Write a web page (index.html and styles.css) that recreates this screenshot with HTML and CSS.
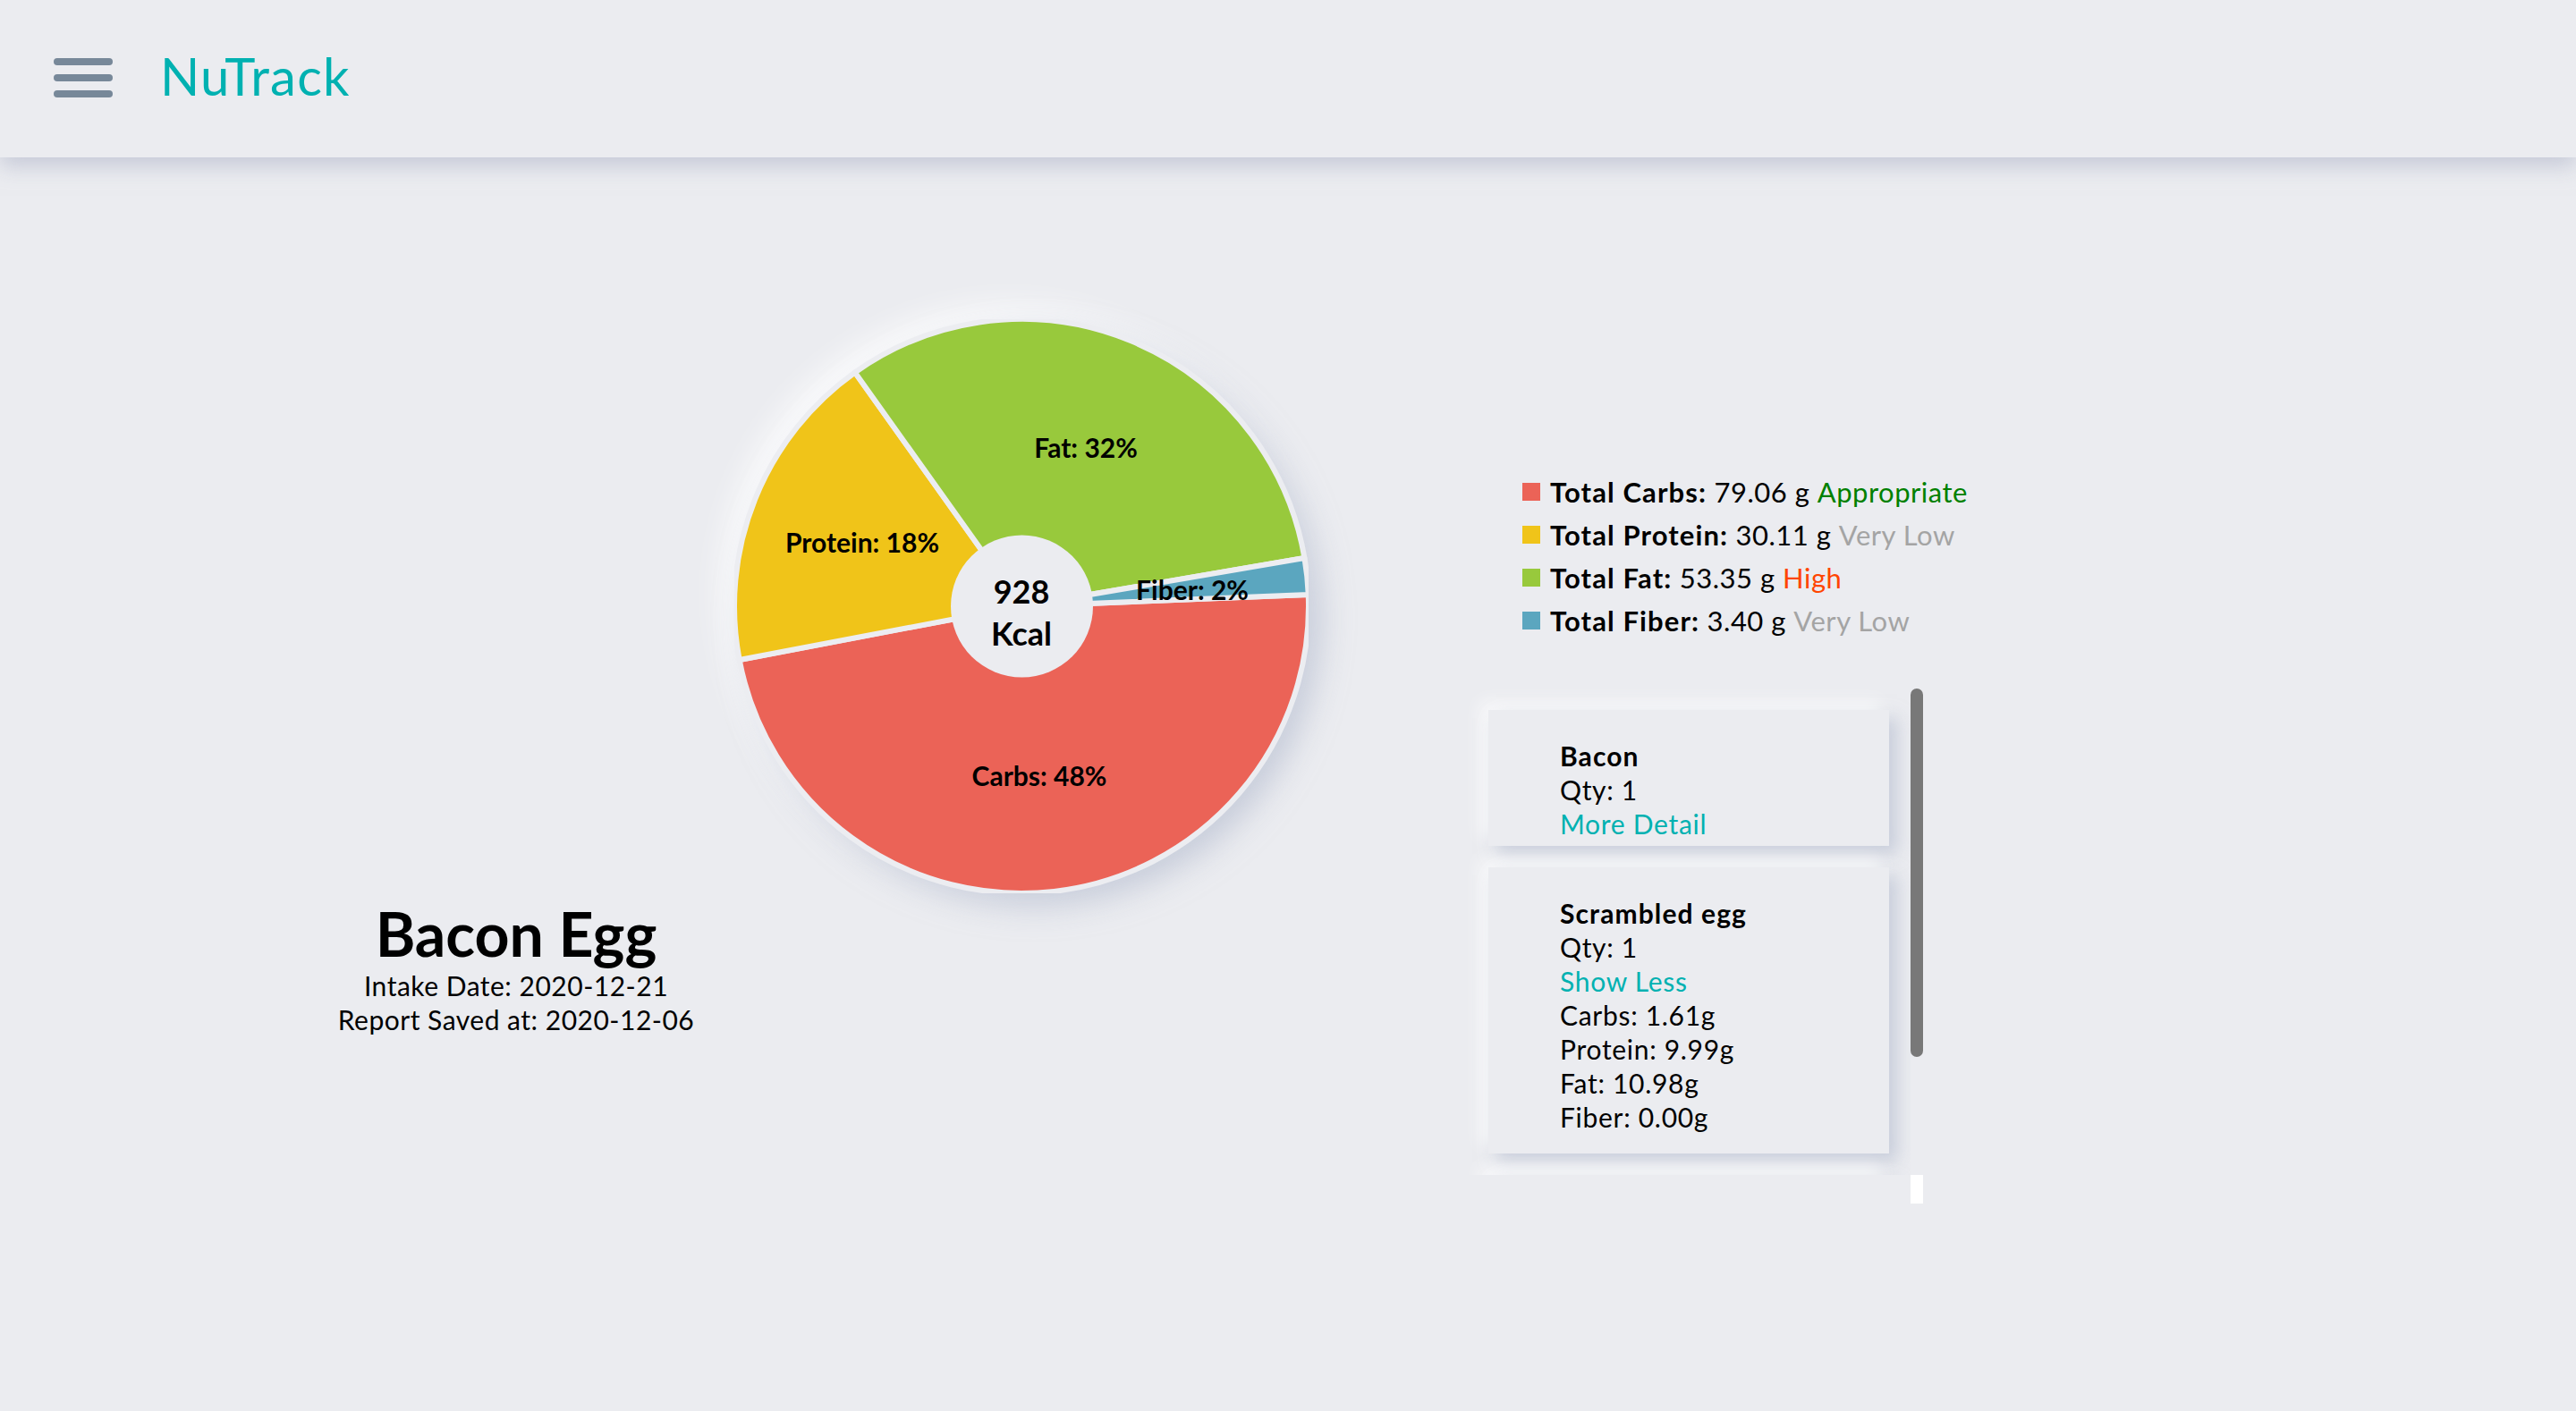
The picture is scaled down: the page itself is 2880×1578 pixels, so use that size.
FILE: index.html
```html
<!DOCTYPE html>
<html lang="en">
<head>
<meta charset="utf-8">
<title>NuTrack</title>
<link rel="stylesheet" href="styles.css">
</head>
<body>
<header class="topbar">
  <svg class="menu-icon" width="66" height="44" viewBox="0 0 66 44" aria-hidden="true">
    <rect x="0" y="0" width="66" height="8" rx="4" fill="#778899"/>
    <rect x="0" y="18" width="66" height="8" rx="4" fill="#778899"/>
    <rect x="0" y="36" width="66" height="8" rx="4" fill="#778899"/>
  </svg>
  <div class="brand">NuTrack</div>
</header>

<main class="report">
  <section class="chart-col">
    <div class="pie">
      <svg width="642" height="642" viewBox="0 0 642 642">
        <g class="slices">
          <path fill="#eb6357" d="M321,321 L641.74,308.12 A321,321 0 0 1 5.65,380.93 Z"/>
          <path fill="#f0c419" d="M321,321 L5.65,380.93 A321,321 0 0 1 134.84,59.48 Z"/>
          <path fill="#98c93c" d="M321,321 L134.84,59.48 A321,321 0 0 1 637.44,267.08 Z"/>
          <path fill="#5ba6bf" d="M321,321 L637.44,267.08 A321,321 0 0 1 641.74,308.12 Z"/>
        </g>
        <circle cx="321.5" cy="321" r="79.5" fill="#ebecf0"/>
        <g class="labels">
          <text x="393" y="155">Fat: 32%</text>
          <text x="143" y="261">Protein: 18%</text>
          <text x="341" y="522">Carbs: 48%</text>
          <text x="512" y="314">Fiber: 2%</text>
        </g>
        <g class="kcal">
          <text x="321" y="318">928</text>
          <text x="321" y="365">Kcal</text>
        </g>
      </svg>
    </div>
    <div class="meal-info">
      <h1 class="meal-name">Bacon Egg</h1>
      <div class="meal-date">Intake Date: 2020-12-21</div>
      <div class="meal-date">Report Saved at: 2020-12-06</div>
    </div>
  </section>

  <section class="side-col">
    <ul class="legend">
      <li><span class="swatch carbs"></span><b>Total Carbs:</b>&nbsp;79.06 g&nbsp;<span class="ok">Appropriate</span></li>
      <li><span class="swatch protein"></span><b>Total Protein:</b>&nbsp;30.11 g&nbsp;<span class="low">Very Low</span></li>
      <li><span class="swatch fat"></span><b>Total Fat:</b>&nbsp;53.35 g&nbsp;<span class="high">High</span></li>
      <li><span class="swatch fiber"></span><b>Total Fiber:</b>&nbsp;3.40 g&nbsp;<span class="low">Very Low</span></li>
    </ul>

    <div class="food-list">
      <div class="food-viewport">
        <div class="food-card">
          <div class="food-name">Bacon</div>
          <div>Qty: 1</div>
          <div class="toggle">More Detail</div>
        </div>
        <div class="food-card open">
          <div class="food-name">Scrambled egg</div>
          <div>Qty: 1</div>
          <div class="toggle">Show Less</div>
          <div class="details">
            <div>Carbs: 1.61g</div>
            <div>Protein: 9.99g</div>
            <div>Fat: 10.98g</div>
            <div>Fiber: 0.00g</div>
          </div>
        </div>
        <div class="food-card next" aria-hidden="true"></div>
      </div>
      <div class="scrollbar">
        <div class="thumb"></div>
        <div class="corner"></div>
      </div>
    </div>
  </section>
</main>
</body>
</html>
```

FILE: styles.css
```css
* { box-sizing: border-box; }

html, body {
  margin: 0;
  padding: 0;
}

body {
  background: #ebecf0;
  color: #000;
  font-family: "Lato", "Open Sans", sans-serif;
  min-height: 100vh;
  overflow: hidden;
}

.topbar {
  height: 176px;
  display: flex;
  align-items: center;
  padding: 0 0 6px 60px;
  background: #ebecf0;
  box-shadow: 0 10px 22px rgba(170, 174, 196, 0.55);
  position: relative;
  z-index: 2;
}

.menu-icon { display: block; margin-top: 4px; }

.brand {
  margin-left: 53px;
  font-size: 58px;
  letter-spacing: 1.2px;
  color: #00b1b1;
  line-height: 1;
}

.report {
  display: flex;
  align-items: flex-start;
}

.chart-col {
  width: 1463px;
  padding-top: 181px;
  display: flex;
  flex-direction: column;
}

.pie {
  margin-left: 821px;
  width: 642px;
  height: 642px;
  border-radius: 50%;
  box-shadow: 14px 14px 34px rgba(170, 178, 200, 0.55), -14px -14px 34px rgba(255, 255, 255, 0.85);
}

.pie svg { display: block; }

.slices path {
  stroke: #ecedf1;
  stroke-width: 6;
  stroke-linejoin: round;
}

.labels text {
  font-family: "Lato", sans-serif;
  font-weight: 700;
  font-size: 30px;
  text-anchor: middle;
  fill: #000;
}

.kcal text {
  font-family: "Lato", sans-serif;
  font-weight: 700;
  font-size: 36px;
  text-anchor: middle;
  fill: #000;
}

.meal-info {
  width: 1154px;
  margin-top: 6px;
  text-align: center;
}

.meal-name {
  margin: 0;
  font-size: 68px;
  line-height: 78px;
  font-weight: 700;
}

.meal-date {
  font-size: 30px;
  line-height: 38px;
  letter-spacing: 0.5px;
}

.side-col {
  margin-left: 175px;
  padding-top: 350px;
  width: 512px;
}

.legend {
  list-style: none;
  margin: 0 0 52px 64px;
  padding: 0;
  font-size: 31px;
  letter-spacing: 0.5px;
  line-height: 48px;
  white-space: nowrap;
}

.legend b { letter-spacing: 1.1px; }

.legend li {
  display: flex;
  align-items: center;
}

.swatch {
  width: 20px;
  height: 20px;
  margin-right: 11px;
  flex: none;
}
.swatch.carbs { background: #eb6357; }
.swatch.protein { background: #f0c419; }
.swatch.fat { background: #98c93c; }
.swatch.fiber { background: #5ba6bf; }

.ok { color: #008000; }
.low { color: #a4a4a4; }
.high { color: #ff4500; }

.food-list {
  display: flex;
  align-items: flex-start;
}

.food-viewport {
  width: 498px;
  height: 544px;
  overflow: hidden;
  padding: 24px 24px 0 26px;
  display: flex;
  flex-direction: column;
  gap: 24px;
}

.food-card {
  flex: none;
  background: #ebecf0;
  padding: 32px 20px 6px 80px;
  font-size: 30px;
  letter-spacing: 0.7px;
  line-height: 38px;
  box-shadow: 9px 9px 18px rgba(170, 178, 200, 0.55), -9px -9px 18px rgba(255, 255, 255, 0.75);
}

.food-card.next { height: 152px; }

.details { margin-bottom: 16px; }

.food-name { font-weight: 700; letter-spacing: 1.1px; }

.toggle { color: #00b1b1; }

.scrollbar {
  width: 14px;
  height: 576px;
  display: flex;
  flex-direction: column;
  justify-content: space-between;
}

.thumb {
  height: 412px;
  background: #787878;
  border-radius: 7px;
}

.corner {
  height: 32px;
  background: #ffffff;
}
```
